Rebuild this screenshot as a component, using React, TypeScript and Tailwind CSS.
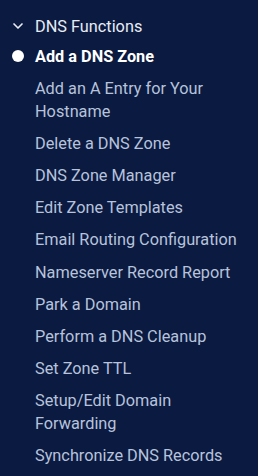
import { ChevronDown } from 'lucide-react';

const items = [
  'Add an A Entry for Your Hostname',
  'Delete a DNS Zone',
  'DNS Zone Manager',
  'Edit Zone Templates',
  'Email Routing Configuration',
  'Nameserver Record Report',
  'Park a Domain',
  'Perform a DNS Cleanup',
  'Set Zone TTL',
  'Setup/Edit Domain Forwarding',
  'Synchronize DNS Records',
];

export default function App() {
  return (
    <div
      className="w-[258px] h-[476px] bg-[#0b1a40] overflow-hidden"
      style={{ fontFamily: 'Roboto, "Liberation Sans", sans-serif' }}
    >
      <div className="pt-3 pr-3">
        <div className="flex items-center h-[28px]">
          <span className="w-[35px] flex justify-center pl-[1px]">
            <ChevronDown className="w-4 h-4 text-[#e8ecf5]" strokeWidth={2.5} />
          </span>
          <span className="text-[16.3px] leading-[23px] text-[#e8ecf5]">DNS Functions</span>
        </div>
        <div className="flex items-center h-[32px]">
          <span className="w-[35px] flex justify-center">
            <span className="w-[12px] h-[12px] rounded-full bg-white" />
          </span>
          <span className="text-[16.3px] leading-[23px] font-bold text-white">Add a DNS Zone</span>
        </div>
        <ul className="pl-[35px]">
          {items.map((item) => (
            <li
              key={item}
              className="py-[4.6px] text-[16.3px] leading-[23px] text-[#b7c3dc]"
            >
              {item}
            </li>
          ))}
        </ul>
      </div>
    </div>
  );
}
